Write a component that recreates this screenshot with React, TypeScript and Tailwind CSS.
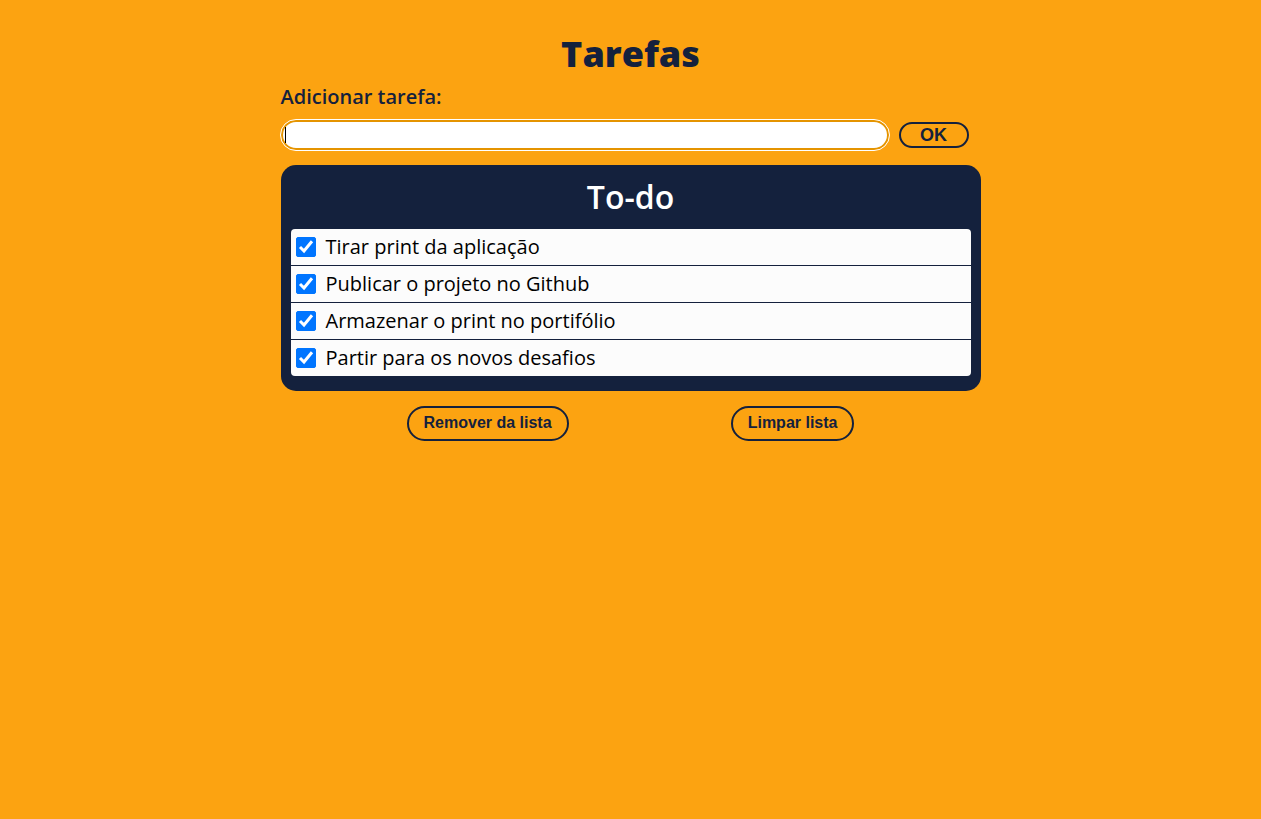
import { useState } from "react";

const initialTasks = [
  "Tirar print da aplicação",
  "Publicar o projeto no Github",
  "Armazenar o print no portifólio",
  "Partir para os novos desafios",
];

const outlineButton =
  "rounded-full border-2 border-[#14213d] font-['Liberation_Sans',sans-serif] font-bold text-[#14213d]";

function TaskRow({ label, id }: { label: string; id: string }) {
  const [done, setDone] = useState(true);
  return (
    <li className="flex h-9 items-center bg-[#fcfcfc] pl-[5px] first:rounded-t last:rounded-b">
      <span className="relative flex size-5">
        <input
          id={id}
          type="checkbox"
          checked={done}
          onChange={(e) => setDone(e.target.checked)}
          className="size-5 appearance-none rounded-xs border border-[#767676] bg-white checked:border-[#0075ff] checked:bg-[#0075ff]"
        />
        {done && (
          <svg viewBox="0 0 20 20" className="pointer-events-none absolute inset-0 size-5" fill="none" stroke="white" strokeWidth="3">
            <path d="M4 10 L8 14 L16 4.2" />
          </svg>
        )}
      </span>
      <label htmlFor={id} className="pl-[10px] text-xl text-black">
        {label}
      </label>
    </li>
  );
}

export default function App() {
  const [text, setText] = useState("");
  const [tasks, setTasks] = useState(initialTasks);
  return (
    <main className="min-h-screen bg-[#fca311] font-['Open_Sans',sans-serif] text-[#14213d]">
      <div className="mx-auto max-w-[700px] pt-7">
        <h1 className="text-center text-4xl leading-[52px] font-extrabold">Tarefas</h1>
        <form
          onSubmit={(e) => {
            e.preventDefault();
            if (text) setTasks([...tasks, text]);
            setText("");
          }}
        >
          <label htmlFor="task" className="block pt-[3px] text-xl font-semibold">
            Adicionar tarefa:
          </label>
          <div className="mt-[9px] flex items-center gap-[10px] pr-3">
            <div className="relative flex min-w-0 flex-1">
              <input
                id="task"
                autoFocus
                value={text}
                onChange={(e) => setText(e.target.value)}
                className={`h-[30px] w-full rounded-full border-2 border-[#e59400] bg-white px-0.5 text-black outline outline-white ${text ? "" : "caret-transparent"}`}
              />
              {!text && (
                <span className="pointer-events-none absolute top-[7px] left-1 h-4 w-px bg-black" />
              )}
            </div>
            <button type="submit" className={`${outlineButton} h-[26px] w-[70px] text-lg leading-none`}>
              OK
            </button>
          </div>
        </form>
        <section className="mt-[15px] rounded-[15px] bg-[#14213d] px-[10px] pb-[15px]">
          <h2 className="text-center text-[32px] leading-[64px] font-semibold text-white">To-do</h2>
          <ul className="flex flex-col gap-px">
            {tasks.map((t, i) => (
              <TaskRow key={i} id={`task-${i}`} label={t} />
            ))}
          </ul>
        </section>
        <div className="mt-[15px] flex justify-around px-[45px]">
          <button type="button" className={`${outlineButton} h-[35px] px-[15px] pb-0.5`}>
            Remover da lista
          </button>
          <button type="button" onClick={() => setTasks([])} className={`${outlineButton} h-[35px] px-[15px] pb-0.5`}>
            Limpar lista
          </button>
        </div>
      </div>
    </main>
  );
}
